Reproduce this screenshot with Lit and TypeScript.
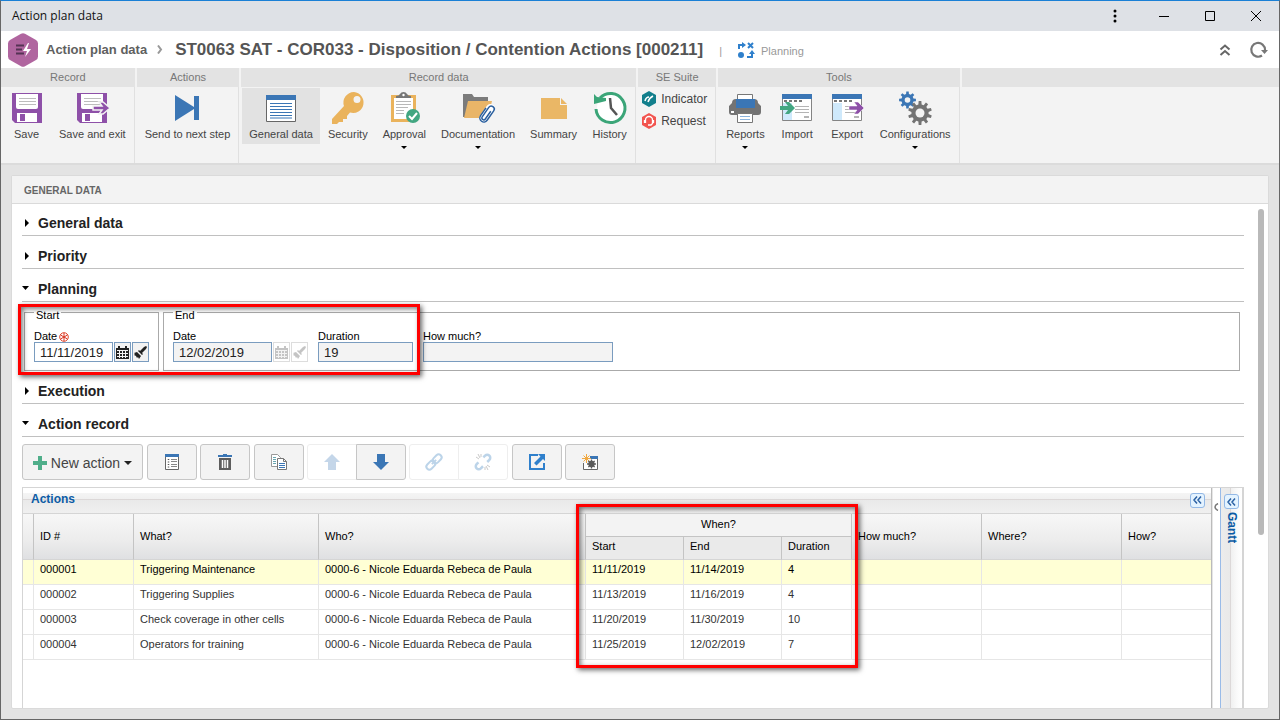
import { LitElement, html, css, svg, nothing, TemplateResult } from "lit";
import { customElement } from "lit/decorators.js";
import { classMap } from "lit/directives/class-map.js";

const floppy = svg`
  <path fill="#8e50a8" d="M1 1h30v30H4l-3-3z"/>
  <path fill="#fff" d="M5 2h22v13a2 2 0 0 1-2 2H7a2 2 0 0 1-2-2z"/>
  <path stroke="#bdbdbd" d="M8 6.500h17M8 9.500h17M8 12.500h17"/>
  <path fill="#fff" d="M6 21h20v9H6z"/>
  <path fill="#8e50a8" d="M9 22h5v7H9z"/>`;

const gearPath = (cx: number, cy: number, r: number, teeth: number) => {
  const points: string[] = [];
  const step = (Math.PI * 2) / teeth;
  for (let i = 0; i < teeth; i++) {
    const a = i * step - Math.PI / 2;
    const profile = [[-0.3, 0.72], [-0.18, 1], [0.18, 1], [0.3, 0.72]];
    for (const [da, k] of profile) {
      points.push(`${(cx + Math.cos(a + da * step) * r * k).toFixed(2)} ${(cy + Math.sin(a + da * step) * r * k).toFixed(2)}`);
    }
  }
  return `M${points.join("L")}z`;
};

const browser = svg`
  <path fill="#fff" stroke="#848484" d="M1.500 2.500h29v26h-29z"/>
  <path fill="#3b76b5" d="M1 2h30v5H1z"/>
  <path stroke="#777" stroke-width="2" stroke-dasharray="3 2" d="M3 9h18"/>
  <path fill="#cfe9fb" d="M2 11h9v17H2z"/>
  <path stroke="#b4b4b4" d="M14 14.500h14M14 17.500h14M14 20.500h14"/>
  <path fill="#b4b4b4" d="M23 24h5v2h-5z"/>`;

const icons: Record<string, TemplateResult> = {
  save: floppy,
  saveExit: svg`${floppy}
    <path fill="#8e50a8" stroke="#f3f3f3" stroke-width="1.500" d="M17 14h9l-3-4h4l7 6-7 6h-4l3-4h-9z"/>`,
  next: svg`<path fill="#3b76b5" d="M4 3l19 12V4h5v24h-5V17L4 29z"/>`,
  general: svg`
    <path fill="#fff" stroke="#666" d="M1.500 3.500h29v26h-29z"/>
    <path fill="#3b76b5" d="M1 3h30v5H1z"/>
    <path stroke="#3b76b5" d="M5 11.500h22M5 14.500h22M5 17.500h22M5 20.500h22M5 23.500h22M5 26h22"/>`,
  key: svg`
    <path fill="#eab35c" fill-rule="evenodd" d="M22 0a10.500 10.500 0 1 1-4 20.500L15 24v3h-4v3H7l-2 2H0v-5l12-13A10.500 10.500 0 0 1 22 0zm3 4a3.500 3.500 0 1 0 0 7 3.500 3.500 0 0 0 0-7z"/>`,
  approval: svg`
    <path fill="#fff" stroke="#eab35c" stroke-width="3" d="M4.500 4.500h22v24h-22z"/>
    <path fill="#777" d="M8 6V4q3 0 4-2 1-2 3.500-2T19 2q1 2 4 2v2z"/>
    <circle cx="15.500" cy="3" r="1.200" fill="#fff"/>
    <path stroke="#b8b8b8" d="M8 9.500h15M8 12.500h15M8 15.500h12M8 18.500h8M8 21.500h8"/>
    <circle cx="25" cy="24" r="7" fill="#42a681"/>
    <path fill="none" stroke="#fff" stroke-width="2" d="M21 24l3 3 5-6"/>`,
  folder: svg`
    <path fill="#7b7b7b" d="M1 2h9l2 3h14v5H7L3 25H1z"/>
    <path fill="#e9b568" d="M6 9h24l-4 17H2z"/>
    <g fill="none" transform="rotate(35 24 22)">
      <path stroke="#fff" stroke-width="9" stroke-linecap="round" d="M24.500 15v12"/>
      <path stroke="#2a5f9e" stroke-width="1.500" d="M20.500 17v9.500a4 4 0 0 0 8 0V15a3 3 0 0 0-6 0v11.500a1.800 1.800 0 0 0 3.800 0V17"/>
    </g>`,
  summary: svg`<path fill="#eab766" d="M3 6h19v7h7v14H3zM23 6l6 6h-6z"/>`,
  history: svg`
    <circle cx="17" cy="16" r="14" fill="#fff"/>
    <path fill="none" stroke="#3ba578" stroke-width="3" d="M2 17A14.500 14.500 0 1 0 6 6"/>
    <path fill="#3ba578" d="M0 2l3 3 9 1v3L0 12z"/>
    <path fill="none" stroke="#555" stroke-width="2.500" d="M16 6l1 10 6 7"/>`,
  printer: svg`
    <path fill="#fff" stroke="#777" d="M8.500 2.500h15v6h-15z"/>
    <path fill="#737373" d="M3 11q0-4 4-4v9h18V7q4 0 4 4l3 3v6q0 3-3 3H3q-3 0-3-3v-6z"/>
    <path fill="#3b76b5" d="M7 7h19v9H7z"/>
    <path fill="#fff" d="M2 19h3v2H2z"/>
    <path fill="#fff" stroke="#777" d="M8.500 21.500h15v9h-15z"/>
    <path stroke="#8bb4de" d="M11 24.500h10M11 27.500h10"/>`,
  import: svg`${browser}<path fill="#42a681" d="M-1 14h8l-3-4h4l6 6-6 6H4l3-4h-8z"/>`,
  export: svg`${browser}<path fill="#8e50a8" stroke="#fff" stroke-width=".5" d="M18 14h8l-3-4h4l6 6-6 6h-4l3-4h-8z"/>`,
  gears: svg`
    <path fill="#3b76b5" d="${gearPath(8.500, 8, 8.500, 8)}"/><circle cx="8.500" cy="8" r="2.800" fill="#f3f3f3"/>
    <path fill="#737373" d="${gearPath(21, 21, 12, 10)}"/><circle cx="21" cy="21" r="4.500" fill="#f3f3f3"/>`,
  list: svg`
    <path fill="#fff" stroke="#666" d="M1.500 1.500h13v14h-13z"/><path fill="#3b76b5" d="M1 0h14v3H1z"/>
    <path stroke="#555" stroke-width="1.500" stroke-dasharray="1 1.500" d="M4.500 5v9"/>
    <path stroke="#888" d="M7 5.500h6M7 7.500h6M7 10.500h6M7 12.500h6"/>`,
  trash: svg`
    <path fill="#3b76b5" d="M6 0h4v1h5v2H1V1h5z"/>
    <path fill="#5d5d5d" d="M2 4h12v12H2z"/><path stroke="#fff" stroke-width="1.500" d="M5.500 6v8M8 6v8M10.500 6v8"/>`,
  copy: svg`
    <path fill="#fff" stroke="#999" d="M.5.500h6l3 3v9h-9z"/><path stroke="#6aa6b0" d="M2 3.500h3M2 5.500h3M2 7.500h3M2 9.500h3"/>
    <path fill="#fff" stroke="#777" d="M6.500 4.500h6l3 3v8h-9z"/><path fill="none" stroke="#777" d="M12.500 4.500v3h3"/>
    <path stroke="#3b76b5" d="M8 9.500h6M8 11.500h6M8 13.500h6"/>`,
  up: svg`<path fill="#c4d6e9" d="M8 0l8 8h-4v8H4V8H0z"/>`,
  down: svg`<path fill="#3b76b5" d="M8 16l8-8h-4V0H4v8H0z"/>`,
  link: svg`<g fill="none" stroke="#bcd4e9" stroke-width="2" transform="rotate(-45 8 8)">
    <rect x="-1.500" y="5" width="10" height="6" rx="3"/><rect x="7.500" y="5" width="10" height="6" rx="3"/><path d="M5 8h6"/></g>`,
  unlink: svg`<g fill="none" stroke="#bcd4e9" stroke-width="2.500" transform="rotate(-45 8 8)">
    <path d="M4.500 5H2a3 3 0 0 0 0 6h3M11.500 5H14a3 3 0 0 1 0 6h-3"/></g>
    <path stroke="#c9c9c9" d="M1 3l3 2M3 0l2 4M6 0v3M15 13l-3-2M13 16l-2-4M10 16v-3"/>`,
  open: svg`<path fill="none" stroke="#2f80cc" stroke-width="2" d="M9 1H1v14h14V9"/>
    <path fill="#2f80cc" d="M9 0h7v7l-2-2-6.500 6.500L5 9l6.500-6.500z"/>`,
  newGear: svg`<path fill="#fff" stroke="#666" d="M1.500 3.500h14v12h-14z"/><path fill="#3b76b5" d="M8 2h8v3H8z"/>
    <path fill="#f3f3f3" d="M0 0h8v9H0z"/>
    <path stroke="#f0a840" d="M4.500 0v9M0 4.500h9M1.500 1.500l6 6M7.500 1.500l-6 6"/>
    <path fill="#5a5a5a" d="${gearPath(9.500, 10, 4.500, 8)}"/>`,
  calendar: svg`<path fill="currentColor" d="M0 2h2V0h2v2h5V0h2v2h2v11H0z"/>
    <path stroke="#f3f3f3" d="M1 4.500h11M1 7.500h11M1 10.500h11M3.500 5v7M6.500 5v7M9.500 5v7"/>`,
  brush: svg`<path fill="currentColor" d="M10 1l2-1 1 1-1 2-4 4-2-2zM5 4l4 4-1 1-4-4zM3 6l4 4-2 3-1-2-1 1-1-2-2-1 1-1-1-1z"/>`,
};

const icon = (name: string, size: number) =>
  html`<svg class="icon" width=${size} height=${size} aria-hidden="true">${icons[name]}</svg>`;

interface Tool { label: string; icon: string; caret?: boolean; active?: boolean; }
const recordTools: Tool[] = [{ label: "Save", icon: "save" }, { label: "Save and exit", icon: "saveExit" }];
const actionTools: Tool[] = [{ label: "Send to next step", icon: "next" }];
const dataTools: Tool[] = [
  { label: "General data", icon: "general", active: true },
  { label: "Security", icon: "key" },
  { label: "Approval", icon: "approval", caret: true },
  { label: "Documentation", icon: "folder", caret: true },
  { label: "Summary", icon: "summary" },
  { label: "History", icon: "history" },
];
const otherTools: Tool[] = [
  { label: "Reports", icon: "printer", caret: true },
  { label: "Import", icon: "import" },
  { label: "Export", icon: "export" },
  { label: "Configurations", icon: "gears", caret: true },
];

const who = "0000-6 - Nicole Eduarda Rebeca de Paula";
const rows = [
  ["000001", "Triggering Maintenance", who, "11/11/2019", "11/14/2019", "4"],
  ["000002", "Triggering Supplies", who, "11/13/2019", "11/16/2019", "4"],
  ["000003", "Check coverage in other cells", who, "11/20/2019", "11/30/2019", "10"],
  ["000004", "Operators for training", who, "11/25/2019", "12/02/2019", "7"],
];

@customElement("app-root")
export class AppRoot extends LitElement {
  static styles = css`
    :host { display: block; font-family: "Liberation Sans", Arial, sans-serif; font-size: 11px; color: #000; }
    * { box-sizing: border-box; }
    button { font: inherit; color: inherit; background: none; border: 0; padding: 0; margin: 0; }
    .icon { display: block; overflow: visible; flex: none; }

    .window { display: flex; flex-direction: column; height: 100vh; overflow: hidden; background: #e3e3e3;
      border: 1px solid #666; border-top-color: #1a80d6; }
    .titlebar { display: flex; align-items: center; height: 30px; flex: none; background: #dee1e6; padding-left: 11px; }
    .caption { flex: 1; font: 12px/16px "Open Sans", sans-serif; color: #111; }
    .winbtn { width: 46px; height: 30px; display: grid; place-items: center; }
    .menu { width: 52px; }

    .crumbs { display: flex; align-items: center; height: 37px; flex: none; background: #fff; padding: 0 11px 0 7px; color: #4f4f4f; }
    .crumb { font-size: 13px; font-weight: bold; color: #606060; text-decoration: none; margin-left: 8px; }
    .arrow { margin: 0 12px 0 10px; }
    .title { margin: 0; font-size: 17px; line-height: 20px; font-weight: bold; color: #555; }
    .pipe { margin: 0 16px 0 16px; padding-top: 2px; color: #999; }
    .status { color: #999; margin-left: 7px; padding-top: 2px; flex: 1; }
    .round { margin-left: 20px; }

    .ribbon { display: flex; gap: 2px; flex: none; background: #f3f3f3; border-bottom: 2px solid #dbdbdb; }
    .group { display: flex; flex-direction: column; border-right: 1px solid #e0e0e0; }
    .rest { flex: 1; border: 0; }
    .ghead { margin: 0; height: 19px; line-height: 19px; background: #e3e3e3; color: #777; font-size: 11px;
      font-weight: normal; text-align: center; margin-right: -1px; }
    .rest .ghead { margin-right: 0; }
    .gbody { display: flex; gap: 1px; height: 76px; padding: 1px 1px 0; align-items: flex-start; }
    .tool { display: flex; flex-direction: column; align-items: center; min-width: 49px; height: 56px; padding: 4px 7px 0;
      color: #444; line-height: 14px; }
    .tool.active { background: #e2e2e2; }
    .tool .label { margin-top: 3px; white-space: nowrap; }
    .caret { width: 0; height: 0; border: 3px solid transparent; border-top-color: currentColor; border-bottom: 0; }
    .tool .caret { color: #000; margin-top: 5px; }
    .suite { flex-direction: column; gap: 0; padding: 1px 8px 0 4px; }
    .suitelink { display: flex; align-items: center; gap: 5px; height: 22px; font-size: 12px; color: #444; text-decoration: none; }

    .panel { display: flex; flex-direction: column; flex: 1; min-height: 0; margin: 10px; background: #fff;
      border: 1px solid #dadada; border-radius: 2px; }
    .phead { margin: 0; height: 28px; line-height: 29px; flex: none; background: #f3f3f3; border-bottom: 1px solid #dadada;
      padding-left: 12px; font-size: 10px; font-weight: bold; color: #666; }
    .pbody { display: flex; flex: 1; min-height: 0; justify-content: space-between; }
    .sections { display: flex; flex-direction: column; gap: 1px; flex: 1; min-width: 0; padding: 0 0 0 10px; }
    .scroll { width: 6px; height: 326px; margin: 5px 4px 0 14px; border-radius: 3px; background: #b9b9b9; flex: none; }
    .section { margin: 0; flex: none; height: 32px; border-bottom: 1px solid #c0c0c0; font-size: 14px; }
    .toggle { display: flex; align-items: center; width: 100%; height: 31px; padding-top: 6px; gap: 8px; font-weight: bold; color: #222; text-align: left; }
    .mark { width: 8px; height: 8px; }

    .planning { position: relative; display: flex; gap: 4px; padding: 0 4px 0 2px; height: 68px; flex: none; }
    fieldset { margin: 0; padding: 9px 9px 8px; border: 1px solid #aaa; min-width: 0; }
    .wide { flex: 1; }
    legend { height: 19px; line-height: 13px; padding: 6px 2px 0; }
    .line { display: flex; gap: 10px; }
    .field { display: flex; flex-direction: column; }
    .field label { height: 11px; line-height: 11px; display: flex; gap: 2px; align-items: center; white-space: nowrap; }
    .controls { display: flex; gap: 1px; }
    input { height: 20px; padding: 0 5px; margin: 0; border: 1px solid #7a9cbf; border-radius: 0; background: #fff;
      font: 13px "Liberation Sans", Arial, sans-serif; color: #222; outline: 0; width: 95px; }
    input[readonly] { background: #f3f3f3; color: #222; }
    .w79 { width: 79px; } .w99 { width: 99px; } .w190 { width: 190px; }
    .mini { width: 17px; height: 20px; display: grid; place-items: center; border: 1px solid #7a9cbf; background: #f3f3f3; color: #222; }
    .mini:disabled { border-color: #ddd; background: #fff; color: #c4c4c4; }
    .mark-box { position: absolute; z-index: 2; border: 3px solid #f00; pointer-events: none;
      box-shadow: 2px 2px 5px rgba(0, 0, 0, .6), inset 2px 2px 5px rgba(0, 0, 0, .5); }
    .on-dates { left: -4px; top: 1px; width: 402px; height: 71px; }
    .on-when { left: -10px; right: -7px; top: -10px; height: 164px; }

    .toolbar { display: flex; gap: 4px; margin-top: 6px; flex: none; }
    .cluster { display: flex; gap: 3px; }
    .btn { width: 50px; height: 36px; display: flex; align-items: center; justify-content: center; background: #f3f3f3;
      border: 1px solid #c6c6c6; border-radius: 3px; }
    .btn:disabled { background: #fff; border-color: #eee; }
    .pair { display: flex; }
    .pair .btn:first-child { border-radius: 3px 0 0 3px; }
    .pair .btn:last-child { border-radius: 0 3px 3px 0; margin-left: -1px; }
    .new { width: 121px; padding-top: 1px; font-size: 14px; color: #444; gap: 4px; }
    .new .caret { border-width: 4px 4px 0; color: #222; }

    .grid { display: flex; flex: 1; min-height: 0; margin-top: 6px; border: 1px solid #d5d5d5; border-right-width: 2px; border-bottom: 0; }
    .list { flex: 1; min-width: 0; border-right: 1px solid #bbb; }
    .lhead { display: flex; justify-content: space-between; align-items: center; height: 26px; padding: 0 6px 1px 8px;
      border-bottom: 1px solid #d5d5d5;
      background: linear-gradient(#fff 0 5px, #f5f5f5 5px, #f0f0f0 11px, #dcd8d8 11px 12px, #e9e9e9 12px, #f0f0f0 100%); }
    .ltitle { margin: 0; font-size: 12px; font-weight: bold; color: #0b5ba5; line-height: 22px; padding-bottom: 2px; }
    .fold { width: 15px; height: 15px; display: grid; place-items: center; border: 1px solid #93b8e6; border-radius: 3px; background: #e4f3ff; }
    table { width: 100%; table-layout: fixed; border-collapse: separate; border-spacing: 0; }
    .c0 { width: 11px; } .c1 { width: 100px; } .c2 { width: 185px; } .c3 { width: 267px; } .c4 { width: 98px; }
    .c6 { width: 70px; } .c7 { width: 130px; } .c8 { width: 140px; }
    th { font-weight: normal; text-align: left; padding: 0 6px 2px; border-right: 1px solid #c4c4c4; border-bottom: 1px solid #d5d5d5;
      background: linear-gradient(#f7f7f7, #ececec 60%, #dfe0e2); }
    th:last-child, td:last-child { border-right: 0; }
    .when { position: relative; text-align: center; height: 23px; background: #f3f3f3; border-bottom-color: #c4c4c4; }
    .sub { height: 23px; padding-bottom: 4px; background: #eaeaea; }
    .sub.last { border-right: 1px solid #c4c4c4; }
    td { height: 25px; padding: 0 6px 7px; border-right: 1px solid #e6e6e6; border-bottom: 1px solid #e6e6e6; color: #333;
      white-space: nowrap; }
    .selected td { background: #ffffd5; color: #000; }
    .splitter { width: 8px; display: flex; justify-content: center; padding-top: 15px; border-left: 1px solid #e6e6e6; }
    .gantt { width: 22px; display: flex; flex-direction: column; align-items: center; padding-top: 6px; border-left: 1px solid #99bbe8;
      background: linear-gradient(90deg, #ececec, #e9e9e9 9px, #dcd8d8 9px 10px, #f0f0f0 10px, #fafafa 16px, #fff); }
    .gtitle { margin: 3px 0 0; writing-mode: vertical-rl; font-size: 12px; line-height: 14px; font-weight: bold; color: #0b5ba5; }
  `;

  private tool(t: Tool) {
    return html`<button class=${classMap({ tool: true, active: !!t.active })}>
      ${icon(t.icon, 32)}<span class="label">${t.label}</span>${t.caret ? html`<span class="caret"></span>` : nothing}
    </button>`;
  }

  private group(name: string, tools: Tool[]) {
    return html`<section class="group"><h2 class="ghead">${name}</h2>
      <div class="gbody">${tools.map((t) => this.tool(t))}</div></section>`;
  }

  private section(name: string, open = false) {
    return html`<h3 class="section"><button class="toggle" aria-expanded=${open ? "true" : "false"}>
      <svg class="mark" viewBox="0 0 8 8" aria-hidden="true"><path d=${open ? "M0 1h7L3.500 5z" : "M3 0l4 4-4 4z"}/></svg>${name}</button></h3>`;
  }

  private pickers(disabled = false) {
    return html`<button class="mini" aria-label="Calendar" ?disabled=${disabled}>${icon("calendar", 13)}</button>
      <button class="mini" aria-label="Clear" ?disabled=${disabled}>${icon("brush", 13)}</button>`;
  }

  private fold() {
    return html`<button class="fold" aria-label="Collapse"><svg width="9" height="8" aria-hidden="true">
      <path fill="none" stroke="#2c62a5" stroke-width="1.500" d="M4 .5L1 4l3 3.500M8 .5L5 4l3 3.500"/></svg></button>`;
  }

  render() {
    return html`<div class="window">
      <header class="titlebar">
        <span class="caption">Action plan data</span>
        <button class="winbtn menu" aria-label="Menu"><svg width="4" height="14"><g fill="#000"><circle cx="2" cy="2" r="1.500"/><circle cx="2" cy="7" r="1.500"/><circle cx="2" cy="12" r="1.500"/></g></svg></button>
        <button class="winbtn" aria-label="Minimize"><svg width="10" height="10"><path stroke="#000" d="M0 5.500h10"/></svg></button>
        <button class="winbtn" aria-label="Maximize"><svg width="10" height="10"><path fill="none" stroke="#000" d="M.5.500h9v9h-9z"/></svg></button>
        <button class="winbtn" aria-label="Close"><svg width="10" height="10"><path stroke="#000" d="M0 0l10 10M10 0L0 10"/></svg></button>
      </header>

      <nav class="crumbs">
        <svg class="icon" width="30" height="34" aria-hidden="true">
          <path fill="#b0659f" d="M13 .7q2-1 4 0l11 6.300q2 1.200 2 3.500v13q0 2.300-2 3.500l-11 6.300q-2 1-4 0L2 27q-2-1.200-2-3.500v-13Q0 8.200 2 7z"/>
          <path stroke="#553355" stroke-width="2" d="M8 12.500h8M8 16.500h6M8 20.500h8"/>
          <path fill="#fff" d="M20 10l-5 8h4l-2 6 6-8h-4l2-6z"/>
        </svg>
        <a class="crumb" href="#">Action plan data</a>
        <svg class="arrow" width="6" height="9" aria-hidden="true"><path fill="none" stroke="#999" stroke-width="2" d="M1 .5l3 4-3 4"/></svg>
        <h1 class="title">ST0063 SAT - COR033 - Disposition / Contention Actions [000211]</h1>
        <span class="pipe">|</span>
        <svg class="icon" width="16" height="16" aria-hidden="true">
          <path fill="none" stroke="#2f80cc" stroke-width="2" d="M1 7V3h4M14 10v5H9M10 1l5 5M15 1l-5 5"/>
          <path fill="#2f80cc" d="M4 0l4 3-4 3zM11 12l3-4 3 4z"/><circle cx="3" cy="13" r="3" fill="#2f80cc"/>
        </svg>
        <span class="status">Planning</span>
        <button class="round" aria-label="Collapse toolbar"><svg class="icon" width="10" height="12"><path fill="none" stroke="#666" stroke-width="2" d="M.5 5.500l4.500-4 4.500 4M.5 11l4.500-4 4.500 4"/></svg></button>
        <button class="round" aria-label="Refresh"><svg class="icon" width="18" height="16"><path fill="none" stroke="#777" stroke-width="2.200" d="M12 13.500A6.900 6.900 0 1 1 15 8"/><path fill="#777" d="M11 8h7l-3.500 4z"/></svg></button>
      </nav>

      <div class="ribbon">
        ${this.group("Record", recordTools)}
        ${this.group("Actions", actionTools)}
        ${this.group("Record data", dataTools)}
        <section class="group"><h2 class="ghead">SE Suite</h2>
          <div class="gbody suite">
            <a class="suitelink" href="#"><svg class="icon" width="14" height="16" aria-hidden="true"><path fill="#127f8c" d="M7 0l7 4v8l-7 4-7-4V4z"/><path fill="none" stroke="#fff" stroke-width="1.500" d="M3 10q1-4 4-4M6 11q1-4 5-6"/></svg>Indicator</a>
            <a class="suitelink" href="#"><svg class="icon" width="14" height="16" aria-hidden="true"><path fill="#f2544f" d="M7 0l7 4v8l-7 4-7-4V4z"/><path fill="none" stroke="#fff" stroke-width="1.300" d="M3.500 10V7a3.500 3.500 0 0 1 7 0v3M2.500 7v3M11.500 7v3M6 12h3l2-2"/></svg>Request</a>
          </div></section>
        ${this.group("Tools", otherTools)}
        <div class="group rest"><div class="ghead"></div></div>
      </div>

      <main class="panel">
        <h2 class="phead">GENERAL DATA</h2>
        <div class="pbody">
          <div class="sections">
            ${this.section("General data")}
            ${this.section("Priority")}
            ${this.section("Planning", true)}
            <form class="planning">
              <fieldset><legend>Start</legend>
                <div class="line"><div class="field">
                  <label for="start">Date <svg width="10" height="10" aria-hidden="true"><circle cx="5" cy="5" r="4.300" fill="#fff" stroke="#e0452c"/><path stroke="#d8301c" d="M5 1v8M1.500 3l7 4M8.500 3l-7 4"/></svg></label>
                  <div class="controls"><input id="start" class="w79" value="11/11/2019">${this.pickers()}</div>
                </div></div>
              </fieldset>
              <fieldset class="wide"><legend>End</legend>
                <div class="line">
                  <div class="field"><label for="end">Date</label>
                    <div class="controls"><input id="end" class="w99" readonly value="12/02/2019">${this.pickers(true)}</div></div>
                  <div class="field"><label for="duration">Duration</label><input id="duration" readonly value="19"></div>
                  <div class="field"><label for="cost">How much?</label><input id="cost" class="w190" readonly></div>
                </div>
              </fieldset>
              <div class="mark-box on-dates"></div>
            </form>
            ${this.section("Execution")}
            ${this.section("Action record", true)}
            <div class="toolbar">
              <button class="btn new"><svg width="14" height="14" aria-hidden="true"><path fill="#4fae8a" d="M5 0h4v5h5v4H9v5H5V9H0V5h5z"/></svg>New action<span class="caret"></span></button>
              <div class="cluster">
                <button class="btn" aria-label="Details">${icon("list", 16)}</button>
                <button class="btn" aria-label="Delete">${icon("trash", 16)}</button>
              </div>
              <div class="cluster">
                <button class="btn" aria-label="Copy">${icon("copy", 16)}</button>
                <div class="pair"><button class="btn" disabled aria-label="Move up">${icon("up", 16)}</button><button class="btn" aria-label="Move down">${icon("down", 16)}</button></div>
                <div class="pair"><button class="btn" disabled aria-label="Link">${icon("link", 16)}</button><button class="btn" disabled aria-label="Unlink">${icon("unlink", 16)}</button></div>
              </div>
              <div class="cluster">
                <button class="btn" aria-label="Open">${icon("open", 16)}</button>
                <button class="btn" aria-label="Configure">${icon("newGear", 16)}</button>
              </div>
            </div>
            <div class="grid">
              <section class="list">
                <div class="lhead"><h4 class="ltitle">Actions</h4>${this.fold()}</div>
                <table>
                  <colgroup><col class="c0"><col class="c1"><col class="c2"><col class="c3"><col class="c4"><col class="c4"><col class="c6"><col class="c7"><col class="c8"><col></colgroup>
                  <thead>
                    <tr><th rowspan="2"></th><th rowspan="2">ID #</th><th rowspan="2">What?</th><th rowspan="2">Who?</th>
                      <th class="when" colspan="3">When?<div class="mark-box on-when"></div></th>
                      <th rowspan="2">How much?</th><th rowspan="2">Where?</th><th rowspan="2">How?</th></tr>
                    <tr><th class="sub">Start</th><th class="sub">End</th><th class="sub last">Duration</th></tr>
                  </thead>
                  <tbody>${rows.map((r, i) => html`<tr class=${classMap({ selected: i === 0 })}>
                    <td></td>${r.map((c) => html`<td>${c}</td>`)}<td></td><td></td><td></td></tr>`)}</tbody>
                </table>
              </section>
              <div class="splitter"><svg width="5" height="8" aria-hidden="true"><path fill="none" stroke="#777" stroke-width="1.500" d="M4 .5Q1 2 1 4t3 3.500"/></svg></div>
              <aside class="gantt">${this.fold()}<h4 class="gtitle">Gantt</h4></aside>
            </div>
          </div>
          <div class="scroll"></div>
        </div>
      </main>
    </div>`;
  }
}
